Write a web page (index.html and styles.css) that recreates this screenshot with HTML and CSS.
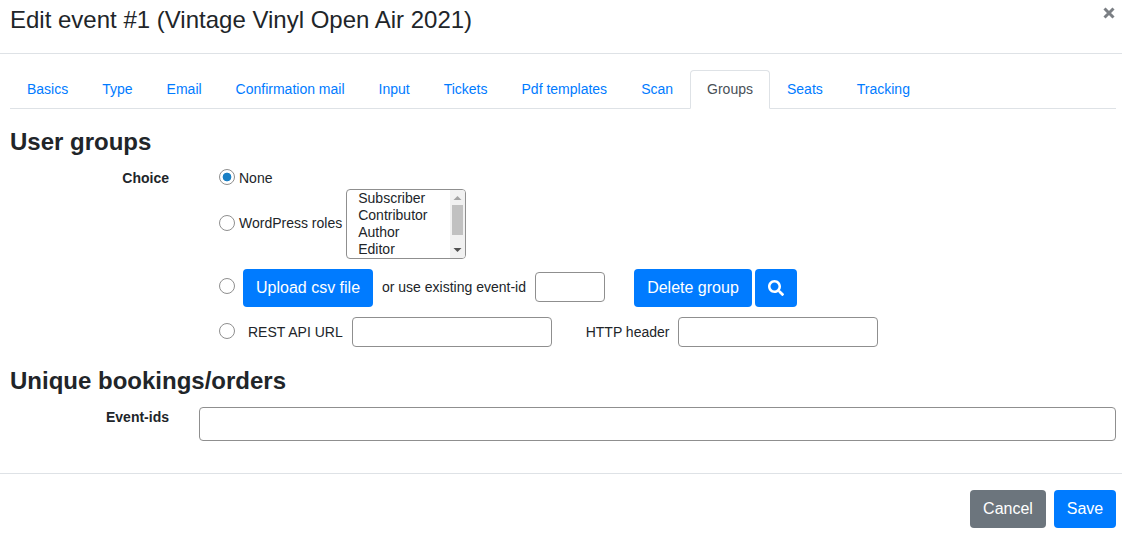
FILE: index.html
```html
<!DOCTYPE html>
<html lang="en">
<head>
  <meta charset="UTF-8" />
  <title>Edit event</title>
  <link rel="stylesheet" href="styles.css">
</head>
<body>
  <div class="modal-card">
    <div class="modal-header">
      <h1>Edit event #1 (Vintage Vinyl Open Air 2021)</h1>
      <span class="modal-close">
        <svg width="12" height="12" viewBox="0 0 12 12"><path d="M1.5 1.5 L10.5 10.5 M10.5 1.5 L1.5 10.5" stroke="#7b7f84" stroke-width="3" fill="none"/></svg>
      </span>
    </div>
    <div class="modal-body">
      <ul class="tabs">
        <li><a href="#">Basics</a></li>
        <li><a href="#">Type</a></li>
        <li><a href="#">Email</a></li>
        <li><a href="#">Confirmation mail</a></li>
        <li><a href="#">Input</a></li>
        <li><a href="#">Tickets</a></li>
        <li><a href="#">Pdf templates</a></li>
        <li><a href="#">Scan</a></li>
        <li class="active"><a href="#">Groups</a></li>
        <li><a href="#">Seats</a></li>
        <li><a href="#">Tracking</a></li>
      </ul>

      <h2 class="first-title">User groups</h2>
      <div class="form-row">
        <label class="row-label choice-label">Choice</label>
        <div class="choices">
          <div class="choice choice-none">
            <input type="radio" name="group" checked />
            <span>None</span>
          </div>
          <div class="choice choice-roles">
            <input type="radio" name="group" />
            <span>WordPress roles</span>
            <div class="roles-wrap">
              <select multiple size="4" class="roles">
                <option>Subscriber</option>
                <option>Contributor</option>
                <option>Author</option>
                <option>Editor</option>
                <option>Administrator</option>
              </select>
              <!-- the browser hides native scrollbars in the photo, so this one is drawn -->
              <div class="scrollbar">
                <svg class="scroll-arrow" width="15" height="15" viewBox="0 0 15 15"><path d="M3.5 10 L7.5 6 L11.5 10 Z" fill="#a3a3a3"/></svg>
                <div class="scroll-thumb"></div>
                <svg class="scroll-arrow scroll-arrow-down" width="15" height="15" viewBox="0 0 15 15"><path d="M3.5 5 L7.5 9 L11.5 5 Z" fill="#505050"/></svg>
              </div>
            </div>
          </div>
          <div class="choice choice-csv">
            <input type="radio" name="group" />
            <button type="button" class="btn upload-btn">Upload csv file</button>
            <span class="existing-label">or use existing event-id</span>
            <input type="text" class="field event-id" />
            <button type="button" class="btn delete-btn">Delete group</button>
            <button type="button" class="btn search-btn">
              <svg width="16" height="16" viewBox="0 0 512 512"><path fill="#fff" d="M505 442.7L405.3 343c-4.5-4.5-10.6-7-17-7H372c27.6-35.3 44-79.7 44-128C416 93.1 322.9 0 208 0S0 93.1 0 208s93.1 208 208 208c48.3 0 92.7-16.4 128-44v16.3c0 6.4 2.5 12.5 7 17l99.7 99.7c9.4 9.4 24.6 9.4 33.9 0l28.3-28.3c9.4-9.4 9.4-24.6.1-34zM208 336c-70.7 0-128-57.2-128-128 0-70.7 57.2-128 128-128 70.7 0 128 57.2 128 128 0 70.7-57.2 128-128 128z"/></svg>
            </button>
          </div>
          <div class="choice choice-rest">
            <input type="radio" name="group" />
            <span class="rest-label">REST API URL</span>
            <input type="text" class="field rest-url" />
            <span class="http-label">HTTP header</span>
            <input type="text" class="field http-header" />
          </div>
        </div>
      </div>

      <h2 class="second-title">Unique bookings/orders</h2>
      <div class="form-row">
        <label class="row-label ids-label">Event-ids</label>
        <input type="text" class="field event-ids" />
      </div>
    </div>
    <div class="modal-footer">
      <button type="button" class="btn btn-grey">Cancel</button>
      <button type="button" class="btn">Save</button>
    </div>
  </div>
</body>
</html>
```

FILE: styles.css
```css
* {
  box-sizing: border-box;
}
html, body {
  height: 100%;
}
body {
  margin: 0;
  background: #fff;
  font-family: "Liberation Sans", Arial, sans-serif;
  font-size: 14px;
  color: #212529;
  overflow: hidden;
}
.modal-card {
  width: 1122px;
}
.modal-header {
  height: 54px;
  border-bottom: 1px solid #dee2e6;
  padding: 0 10px;
  display: flex;
  justify-content: space-between;
}
.modal-header h1 {
  margin: 5px 0 0 0;
  font-size: 24px;
  line-height: 29px;
  font-weight: 400;
}
.modal-close {
  margin: 7px -3px 0 0;
  height: 12px;
  line-height: 0;
}
.modal-body {
  padding: 16px 6px 0 10px;
  height: 419px;
}
.tabs {
  list-style: none;
  margin: 0;
  padding: 0;
  display: flex;
  height: 39px;
  border-bottom: 1px solid #dee2e6;
}
.tabs li {
  margin-bottom: -1px;
}
.tabs a {
  display: block;
  height: 39px;
  padding: 10px 16px;
  line-height: 17px;
  color: #007bff;
  text-decoration: none;
  border: 1px solid transparent;
  border-radius: 4px 4px 0 0;
}
.tabs .active a {
  color: #495057;
  background: #fff;
  border-color: #dee2e6 #dee2e6 #fff;
}
h2 {
  margin: 0;
  font-size: 24px;
  line-height: 29px;
  font-weight: 700;
}
.first-title {
  margin-top: 18px;
}
.second-title {
  margin-top: 19px;
}
.form-row {
  display: flex;
  align-items: flex-start;
}
.row-label {
  width: 159px;
  text-align: right;
  font-weight: 700;
}
.choice-label {
  padding-top: 14px;
}
.ids-label {
  padding-top: 2px;
}
.choices {
  margin-left: 50px;
  margin-top: 6px;
  flex: 1;
}
.choice {
  display: flex;
  align-items: center;
}
.choice input[type="radio"] {
  appearance: none;
  margin: 0 4px 0 0;
  width: 16px;
  height: 16px;
  border: 1px solid #8f8f8f;
  border-radius: 50%;
  background: #fff;
  flex: none;
}
.choice input[type="radio"]:checked {
  background: radial-gradient(circle, #1a7fc4 0, #1a7fc4 4px, #fff 4.7px);
}
.choice-none {
  margin-top: 7px;
  height: 16px;
}
.choice-none span {
  padding-top: 1px;
}
.choice-roles {
  margin-top: 4px;
}
.choice-roles input[type="radio"] {
  margin-bottom: 2px;
}
.choice-roles > span {
  margin-bottom: 2px;
}
.roles-wrap {
  position: relative;
  margin-left: 4px;
  width: 120px;
  height: 70px;
}
.roles {
  display: block;
  width: 100%;
  height: 100%;
  border: 1px solid #8f8f8f;
  border-radius: 4px;
  padding: 0 8px;
  background: #fff;
  color: #212529;
  font-family: inherit;
  font-size: 14px;
  line-height: 17px;
  overflow: hidden;
}
.roles option {
  padding: 0 3px;
  min-height: 17px;
}
.scrollbar {
  position: absolute;
  top: 1px;
  right: 1px;
  bottom: 1px;
  width: 15px;
  background: #f1f1f1;
  border-radius: 0 3px 3px 0;
  display: flex;
  flex-direction: column;
}
.scroll-arrow {
  display: block;
  flex: none;
}
.scroll-arrow-down {
  margin-top: auto;
}
.scroll-thumb {
  height: 30px;
  margin: 0 2px;
  background: #c1c1c1;
}
.choice-csv {
  margin-top: 10px;
}
.choice-csv input[type="radio"] {
  margin-bottom: 4px;
}
.choice-rest {
  margin-top: 10px;
}
.choice-rest input[type="radio"] {
  margin-bottom: 2px;
}
.btn {
  height: 38px;
  padding: 0 13px;
  border: 0;
  border-radius: 4px;
  background: #007bff;
  color: #fff;
  font-family: inherit;
  font-size: 16px;
  white-space: nowrap;
  cursor: pointer;
}
.btn-grey {
  background: #6c757d;
}
.upload-btn {
  margin-left: 4px;
  width: 130px;
}
.existing-label {
  margin-left: 9px;
  margin-bottom: 2px;
}
.field {
  height: 30px;
  border: 1px solid #8f8f8f;
  border-radius: 4px;
  background: #fff;
  padding: 0 8px;
}
.event-id {
  margin-left: 9px;
  margin-bottom: 2px;
  width: 70px;
}
.delete-btn {
  margin-left: 29px;
  width: 118px;
}
.search-btn {
  margin-left: 3px;
  width: 42px;
  padding: 0;
  line-height: 0;
}
.rest-label {
  margin-left: 9px;
}
.rest-url {
  margin-left: 9px;
  width: 200px;
}
.http-label {
  margin-left: 34px;
}
.http-header {
  margin-left: 9px;
  width: 200px;
}
.event-ids {
  margin-left: 30px;
  flex: 1;
  height: 34px;
}
.second-title + .form-row {
  margin-top: 12px;
}
.modal-footer {
  border-top: 1px solid #dee2e6;
  padding: 16px 6px 0 0;
  display: flex;
  justify-content: flex-end;
  gap: 8px;
}
.modal-footer .btn {
  padding: 0;
  width: 76px;
}
.modal-footer .btn:last-child {
  width: 62px;
}
```
